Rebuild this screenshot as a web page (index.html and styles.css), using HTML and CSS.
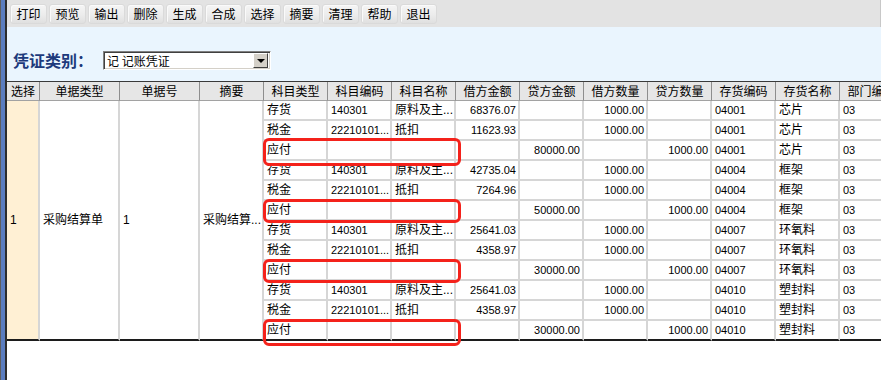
FILE: index.html
```html
<!DOCTYPE html>
<html lang="zh-CN">
<head>
    <meta charset="UTF-8">
    <title>凭证生成</title>
    <link rel="stylesheet" href="styles.css">
</head>
<body>
    <div class="window">
        <div class="edge"></div>
        <div class="main">
            <div class="toolbar">
                <button class="tool">打印</button>
                <button class="tool">预览</button>
                <button class="tool">输出</button>
                <button class="tool">删除</button>
                <button class="tool">生成</button>
                <button class="tool">合成</button>
                <button class="tool">选择</button>
                <button class="tool">摘要</button>
                <button class="tool">清理</button>
                <button class="tool">帮助</button>
                <button class="tool">退出</button>
            </div>

            <div class="filter">
                <span class="filter-label">凭证类别：</span>
                <div class="combo">
                    <span class="combo-text">记 记账凭证</span>
                    <span class="combo-btn"><i class="arrow"></i></span>
                </div>
            </div>

            <div class="grid">
                <div class="hd">选择</div>
                <div class="hd">单据类型</div>
                <div class="hd">单据号</div>
                <div class="hd">摘要</div>
                <div class="hd">科目类型</div>
                <div class="hd">科目编码</div>
                <div class="hd">科目名称</div>
                <div class="hd">借方金额</div>
                <div class="hd">贷方金额</div>
                <div class="hd">借方数量</div>
                <div class="hd">贷方数量</div>
                <div class="hd">存货编码</div>
                <div class="hd">存货名称</div>
                <div class="hd">部门编码</div>

                <!-- merged cells for the one document -->
                <div class="c m sel col1 end">1</div>
                <div class="c m col2 end">采购结算单</div>
                <div class="c m col3 end">1</div>
                <div class="c m col4 end">采购结算...</div>

                <div class="c">存货</div><div class="c n">140301</div><div class="c">原料及主...</div><div class="c n r">68376.07</div><div class="c"></div><div class="c n r">1000.00</div><div class="c"></div><div class="c n">04001</div><div class="c">芯片</div><div class="c n">03</div>
                <div class="c">税金</div><div class="c n">22210101...</div><div class="c">抵扣</div><div class="c n r">11623.93</div><div class="c"></div><div class="c n r">1000.00</div><div class="c"></div><div class="c n">04001</div><div class="c">芯片</div><div class="c n">03</div>
                <div class="c">应付</div><div class="c"></div><div class="c"></div><div class="c"></div><div class="c n r">80000.00</div><div class="c"></div><div class="c n r">1000.00</div><div class="c n">04001</div><div class="c">芯片</div><div class="c n">03</div>

                <div class="c">存货</div><div class="c n">140301</div><div class="c">原料及主...</div><div class="c n r">42735.04</div><div class="c"></div><div class="c n r">1000.00</div><div class="c"></div><div class="c n">04004</div><div class="c">框架</div><div class="c n">03</div>
                <div class="c">税金</div><div class="c n">22210101...</div><div class="c">抵扣</div><div class="c n r">7264.96</div><div class="c"></div><div class="c n r">1000.00</div><div class="c"></div><div class="c n">04004</div><div class="c">框架</div><div class="c n">03</div>
                <div class="c">应付</div><div class="c"></div><div class="c"></div><div class="c"></div><div class="c n r">50000.00</div><div class="c"></div><div class="c n r">1000.00</div><div class="c n">04004</div><div class="c">框架</div><div class="c n">03</div>

                <div class="c">存货</div><div class="c n">140301</div><div class="c">原料及主...</div><div class="c n r">25641.03</div><div class="c"></div><div class="c n r">1000.00</div><div class="c"></div><div class="c n">04007</div><div class="c">环氧料</div><div class="c n">03</div>
                <div class="c">税金</div><div class="c n">22210101...</div><div class="c">抵扣</div><div class="c n r">4358.97</div><div class="c"></div><div class="c n r">1000.00</div><div class="c"></div><div class="c n">04007</div><div class="c">环氧料</div><div class="c n">03</div>
                <div class="c">应付</div><div class="c"></div><div class="c"></div><div class="c"></div><div class="c n r">30000.00</div><div class="c"></div><div class="c n r">1000.00</div><div class="c n">04007</div><div class="c">环氧料</div><div class="c n">03</div>

                <div class="c">存货</div><div class="c n">140301</div><div class="c">原料及主...</div><div class="c n r">25641.03</div><div class="c"></div><div class="c n r">1000.00</div><div class="c"></div><div class="c n">04010</div><div class="c">塑封料</div><div class="c n">03</div>
                <div class="c">税金</div><div class="c n">22210101...</div><div class="c">抵扣</div><div class="c n r">4358.97</div><div class="c"></div><div class="c n r">1000.00</div><div class="c"></div><div class="c n">04010</div><div class="c">塑封料</div><div class="c n">03</div>
                <div class="c end">应付</div><div class="c end"></div><div class="c end"></div><div class="c end"></div><div class="c n r end">30000.00</div><div class="c end"></div><div class="c n r end">1000.00</div><div class="c n end">04010</div><div class="c end">塑封料</div><div class="c n end">03</div>

                <!-- hand-drawn red marks over the payable rows -->
                <div class="mark mark1"></div>
                <div class="mark mark2"></div>
                <div class="mark mark3"></div>
                <div class="mark mark4"></div>
            </div>
        </div>
    </div>
</body>
</html>
```

FILE: styles.css
```css
body {
    margin: 0;
    font-family: 'Liberation Sans', 'Noto Sans CJK SC', sans-serif;
    font-size: 12px;
    color: #000;
    overflow: hidden;
}

.window {
    display: flex;
    height: 100vh;
}

.edge {
    flex: none;
    width: 7px;
    background: linear-gradient(to right, #5e5e5e 0 1px, #5b7dbf 1px 5px, #2c2c2c 5px 7px);
}

.main {
    flex: 1;
    min-width: 0;
    overflow: hidden;
    background-color: #fff;
}

/* toolbar */
.toolbar {
    display: flex;
    gap: 2px;
    height: 27px;
    box-sizing: border-box;
    padding: 4px 0 0 3px;
    background-color: #e3e3e3;
    border-right: 1px solid #c8c8c8;
}

.tool {
    width: 37px;
    height: 20px;
    padding: 0;
    border: 1px solid #dadada;
    border-radius: 3px;
    background: linear-gradient(#f5f5f5, #ececec 55%, #e0e0e0);
    box-shadow: inset 1px 1px 0 #fafafa;
    font-family: 'Noto Sans CJK SC', sans-serif;
    font-size: 12px;
    line-height: 18px;
    color: #000;
}

/* voucher type */
.filter {
    display: flex;
    align-items: flex-start;
    height: 54px;
    box-sizing: border-box;
    padding: 24px 0 0 6px;
    background-color: #eaf5fe;
}

.filter-label {
    font-family: 'Noto Sans CJK SC', sans-serif;
    font-size: 16px;
    font-weight: bold;
    line-height: 19px;
    color: #1d3a7c;
}

.combo {
    display: flex;
    align-items: center;
    width: 168px;
    height: 19px;
    box-sizing: border-box;
    margin-left: 10px;
    padding: 0 1px;
    border-top: 1px solid #808080;
    border-left: 1px solid #808080;
    border-right: 1px solid #fff;
    border-bottom: 1px solid #fff;
    box-shadow: inset 1px 1px 0 #404040, inset -1px -1px 0 #d4d0c8;
    background-color: #fff;
}

.combo-text {
    padding-left: 2px;
    font-family: 'Noto Sans CJK SC', sans-serif;
    line-height: 15px;
}

.combo-btn {
    display: flex;
    align-items: center;
    justify-content: center;
    width: 15px;
    height: 15px;
    box-sizing: border-box;
    margin-left: auto;
    margin-right: 1px;
    background-color: #d4d0c8;
    border-top: 1px solid #fff;
    border-left: 1px solid #fff;
    border-right: 1px solid #404040;
    border-bottom: 1px solid #404040;
}

.arrow {
    width: 0;
    height: 0;
    border-top: 4px solid #000;
    border-left: 4px solid transparent;
    border-right: 4px solid transparent;
}

/* data grid */
.grid {
    position: relative;
    display: grid;
    grid-template-columns: 33px 80px 80px 64px repeat(10, 64px);
    grid-template-rows: 19px repeat(12, 20px);
    width: max-content;
    border-top: 1px solid #3a3a3a;
}

.hd {
    box-sizing: border-box;
    border-right: 1px solid #8e8e8e;
    border-bottom: 1px solid #a2a2a2;
    background-color: #e6e6e6;
    font-family: 'Noto Sans CJK SC', sans-serif;
    text-align: center;
    line-height: 18px;
    white-space: nowrap;
}

.c {
    box-sizing: border-box;
    padding: 0 3px;
    border-right: 2px solid #d6d6d6;
    border-bottom: 2px solid #d6d6d6;
    line-height: 18px;
    white-space: nowrap;
    overflow: hidden;
}

.c.n {
    font-size: 11px;
}

.c.r {
    text-align: right;
    padding-right: 2px;
}

.c.end {
    border-bottom-color: #1c1c1c;
}

.m {
    grid-row: 2 / span 12;
    display: flex;
    align-items: center;
}

.col1 { grid-column: 1; }
.col2 { grid-column: 2; }
.col3 { grid-column: 3; }
.col4 { grid-column: 4; }

.sel {
    background-color: #fff0d4;
}

.mark {
    position: absolute;
    left: 256px;
    width: 198px;
    box-sizing: border-box;
    border: 3px solid #f4221b;
    border-radius: 6px;
}

.mark1 { top: 56px; height: 28px; }
.mark2 { top: 117px; height: 24px; }
.mark3 { top: 177px; height: 24px; }
.mark4 { top: 237px; height: 27px; }
```
